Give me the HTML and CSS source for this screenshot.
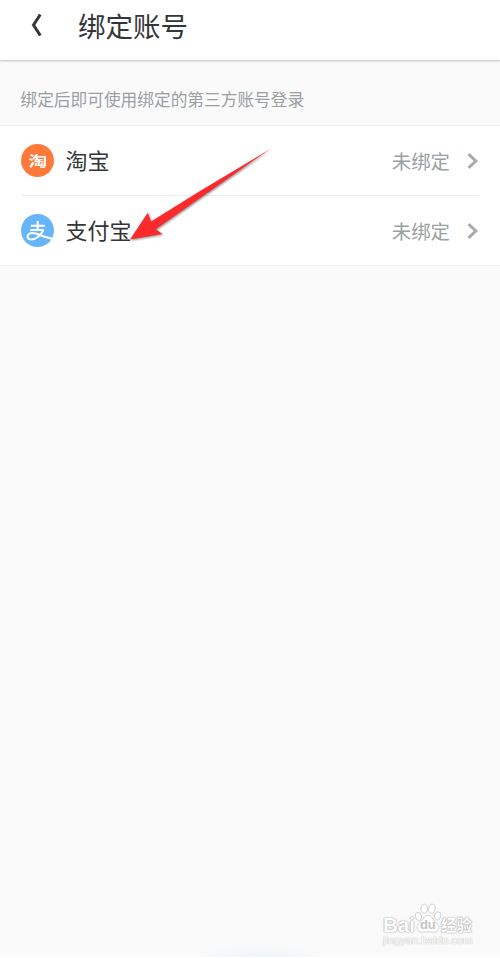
FILE: index.html
```html
<!DOCTYPE html>
<html lang="zh-CN">
<head>
    <meta charset="UTF-8">
    <meta name="viewport" content="width=device-width, initial-scale=1.0">
    <title>绑定账号</title>
    <link rel="stylesheet" href="styles.css">
</head>
<body>
    <header class="header">
        <svg class="back" width="13" height="24" viewBox="0 0 13 24">
            <path d="M11.3 1.5 L4.5 12 L11.3 22.5" />
        </svg>
        <h1>绑定账号</h1>
    </header>

    <p class="hint">绑定后即可使用绑定的第三方账号登录</p>

    <div class="list">
        <div class="item">
            <span class="logo taobao"><span class="tao">淘</span></span>
            <span class="name">淘宝</span>
            <span class="status">未绑定</span>
            <svg class="chevron" width="12" height="16" viewBox="0 0 12 16">
                <path d="M1.5 1.2 L8.8 8 L1.5 14.8" />
            </svg>
        </div>
        <div class="item">
            <svg class="logo" width="33" height="33" viewBox="0 0 34 34">
                <circle cx="17" cy="17" r="17" fill="#66b5fb" />
                <path class="stroke" d="M10 12 H24.5 M17.2 7.3 V16.5 M9.5 16.5 H23.5" />
                <path class="stroke" d="M23 16.5 C20.5 22 15.5 26.3 10.5 26.3 C6.5 26.3 5.6 22.5 8.3 20.6 C11 18.8 15 19.7 19 21.4 C23 23.1 27 24.8 32 25.2" />
            </svg>
            <span class="name">支付宝</span>
            <span class="status">未绑定</span>
            <svg class="chevron" width="12" height="16" viewBox="0 0 12 16">
                <path d="M1.5 1.2 L8.8 8 L1.5 14.8" />
            </svg>
        </div>
    </div>

    <!-- Pointer arrow -->
    <svg class="arrow" width="150" height="105" viewBox="0 0 150 105">
        <path d="M142 2.5 L71 45 L22 75.5 L18.7 66.7 L1 93.5 L33.3 88 L26.7 83.3 L71 52 Z" />
    </svg>

    <!-- Watermark -->
    <div class="watermark">
        <div class="brand">
            <span class="bai">Bai</span>
            <span class="paw">
                <svg width="28" height="31" viewBox="0 0 26 30">
                    <ellipse cx="3.7" cy="13" rx="2.9" ry="3.9" transform="rotate(-15 3.7 13)" />
                    <ellipse cx="9.3" cy="5.5" rx="3.1" ry="4.4" />
                    <ellipse cx="16.8" cy="5.5" rx="3.1" ry="4.4" transform="rotate(8 16.8 5.5)" />
                    <ellipse cx="22.3" cy="12.5" rx="2.9" ry="3.9" transform="rotate(15 22.3 12.5)" />
                    <path d="M13 12 C16.5 12 17.5 16 20.5 18.5 C26 23 23.5 28.5 18.5 28.3 C15 27.8 11 27.8 7.5 28.3 C2.5 28.5 0 23 5.5 18.5 C8.5 16 9.5 12 13 12 Z" />
                </svg>
                <span class="du">du</span>
            </span>
            <span class="jingyan">经验</span>
        </div>
        <div class="site">jingyan.baidu.com</div>
    </div>

    <div class="glow"></div>
</body>
</html>
```

FILE: styles.css
```css
* {
    box-sizing: border-box;
}
body {
    margin: 0;
    height: 958px;
    position: relative;
    overflow: hidden;
    background-color: #fafafa;
    border-bottom: 1px solid #fff;
    font-family: "Noto Sans CJK SC", sans-serif;
    color: #333638;
}
.header {
    display: flex;
    align-items: center;
    height: 60px;
    padding: 0 0 11px 29px;
    background-color: #fff;
    box-shadow: 0 1px 2px rgba(0,0,0,0.24);
}
.back path {
    fill: none;
    stroke: #333638;
    stroke-width: 3;
}
h1 {
    margin: 0 0 0 36px;
    font-size: 27.5px;
    font-weight: 400;
    line-height: 40px;
}
.hint {
    height: 65px;
    margin: 0;
    padding: 12px 0 0 20.5px;
    font-size: 16.7px;
    line-height: 54px;
    color: #999fa3;
}
.list {
    padding: 0 21px;
    background-color: #fff;
    border-top: 1px solid #f0f0f0;
    border-bottom: 1px solid #f0f0f0;
}
.item {
    display: flex;
    align-items: center;
    height: 69px;
}
.item + .item {
    height: 70px;
    border-top: 1px solid #ededed;
}
.logo {
    flex: none;
    width: 33px;
    height: 33px;
}
.taobao {
    display: flex;
    align-items: center;
    justify-content: center;
    border-radius: 50%;
    background-color: #ff7a3a;
    color: #fff;
    font-size: 15.5px;
    font-weight: 700;
    line-height: 33px;
}
.tao {
    transform: scale(1.2, 0.9);
}
.name {
    margin-left: 11.5px;
    padding-bottom: 3px;
    font-size: 22px;
}
.stroke {
    fill: none;
    stroke: #fff;
    stroke-width: 2.1;
}
.status {
    margin-left: auto;
    padding-bottom: 1px;
    font-size: 19.4px;
    color: #999fa3;
}
.chevron {
    margin-left: 17px;
}
.chevron path {
    fill: none;
    stroke: #a9abac;
    stroke-width: 3;
}
.arrow {
    position: absolute;
    left: 129px;
    top: 146px;
}
.arrow path {
    fill: #fc2a2b;
    filter: drop-shadow(1px 1px 1px rgba(0,0,0,0.45));
}

/* Watermark */
.watermark {
    position: absolute;
    left: 383px;
    top: 903px;
    width: 94px;
    color: #fff;
    font-family: "Liberation Sans", "Noto Sans CJK SC", sans-serif;
    font-weight: 700;
    text-shadow: 0 0 1px #aaa, 0 0 1px #aaa, 0 0 2px #bbb;
}
.brand {
    display: flex;
    align-items: flex-end;
    height: 31px;
}
.bai {
    font-size: 20.5px;
    line-height: 18px;
}
.paw {
    position: relative;
    flex: none;
    width: 26px;
    height: 31px;
}
.paw svg {
    margin-left: -1px;
    fill: #fff;
    stroke: #cfcfcf;
    stroke-width: 0.9;
}
.du {
    position: absolute;
    left: 5px;
    top: 15px;
    font-size: 13px;
    line-height: 14px;
    color: #c4c4c4;
    text-shadow: none;
}
.jingyan {
    font-size: 15.5px;
    line-height: 17px;
    white-space: nowrap;
}
.site {
    margin-top: 0;
    font-size: 11.1px;
    font-weight: 400;
    line-height: 13px;
    text-shadow: 0 0 1px #bbb, 0 0 1px #bbb;
}
.glow {
    position: absolute;
    left: 195px;
    bottom: 0;
    width: 130px;
    height: 12px;
    background: radial-gradient(ellipse at bottom, #eef4f9, rgba(250,250,250,0) 70%);
}
```
